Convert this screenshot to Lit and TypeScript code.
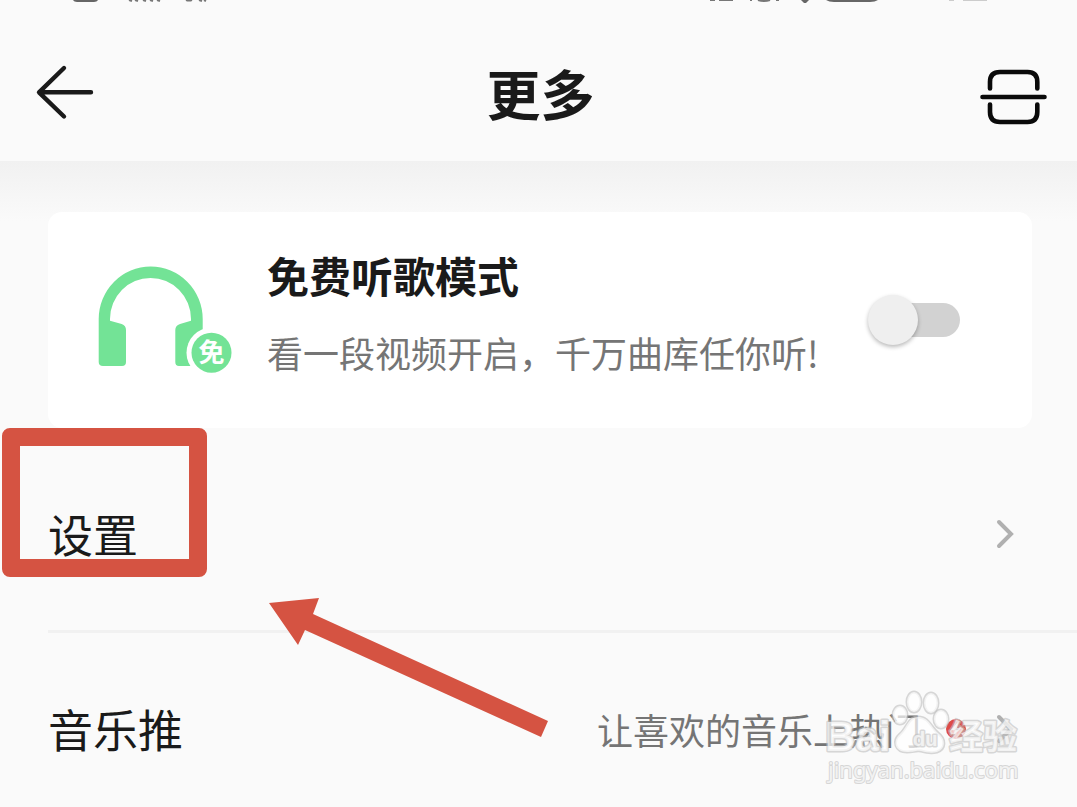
import { LitElement, html, css, svg } from "lit";
import { customElement, property, state } from "lit/decorators.js";

const chevron = html`<svg class="chevron" width="20" height="32" viewBox="0 0 20 32" aria-hidden="true">
  <path d="M4 4 L16 16 L4 28" fill="none" stroke="#b0b0b0" stroke-width="4" stroke-linecap="round" />
</svg>`;

@customElement("status-strip")
class StatusStrip extends LitElement {
  static styles = css`
    :host { display: flex; justify-content: space-between; height: 4px; padding: 0 84px 0 72px; }
    svg { display: block; }
  `;
  render() {
    return html`
      <svg width="140" height="4" viewBox="0 0 140 4" aria-hidden="true">
        <path d="M0 -4 H27 Q27 2 22 2 H5 Q0 2 0 -4Z" fill="#666" />
        <path d="M57 0 l3 1 M63 0 l3 1 M71 0 l3 1 M78 0 l3 1 M85 0 l3 1 M114 0 q3 1 6 0 M127 0 l3 1 M132 0 l2 1" stroke="#777" stroke-width="2" fill="none" />
      </svg>
      <svg width="286" height="4" viewBox="0 0 286 4" aria-hidden="true">
        <path d="M3 0 h5 M12 0 h14 M43 0 h2 M51 0 q6 2 12 0 M69 0 h3" stroke="#777" stroke-width="2" fill="none" />
        <path d="M94 0 h8 l-3 3 h-2Z" fill="#666" />
        <path d="M119 0 H171 Q168 2 163 2 H127 Q122 2 119 0Z" fill="#666" />
        <path d="M242 0 h5 M256 0 h24" stroke="#ccc" stroke-width="2" />
      </svg>`;
  }
}

@customElement("page-header")
class PageHeader extends LitElement {
  static styles = css`
    :host { display: block; background: #fafafa; padding-bottom: 32px; }
    .bar {
      display: grid; grid-template-columns: 1fr auto 1fr; align-items: center;
      padding: 53px 28px 0 32px;
    }
    h1 { margin: 0; font-size: 54px; line-height: 72px; font-weight: 700; color: #1a1a1a; }
    button { display: block; border: 0; padding: 0; background: none; cursor: pointer; }
    .scan { justify-self: end; }
    svg { display: block; }
  `;
  render() {
    return html`
      <status-strip></status-strip>
      <div class="bar">
        <button class="back" aria-label="返回">
          <svg width="64" height="64" viewBox="0 0 64 64" fill="none" stroke="#1a1a1a" stroke-width="4.4" stroke-linecap="round" stroke-linejoin="round">
            <path d="M32 7 L7 31.300 L32 55.500 M8 31.300 H59" />
          </svg>
        </button>
        <h1>更多</h1>
        <button class="scan" aria-label="扫一扫">
          <svg width="70" height="64" viewBox="0 -3 70 64" fill="none" stroke="#0a0a0a" stroke-width="4.600" stroke-linecap="round">
            <path d="M11 24.500 V18 Q11 8 21 8 H48.500 Q58.300 8 58.300 18 V24.500 M3.500 33 H65.500 M11 40.500 V48 Q11 58 21 58 H48.500 Q58.300 58 58.300 48 V40.500" />
          </svg>
        </button>
      </div>`;
  }
}

@customElement("free-mode-card")
class FreeModeCard extends LitElement {
  @state() private on = false;

  static styles = css`
    :host {
      display: flex; align-items: center; margin: 0 45px 0 48px;
      padding: 35px 72px 52px 50px; background: #fff; border-radius: 14px;
    }
    .art { flex: none; display: block; margin: 17px 35px 0 0; }
    .text { flex: 1; display: grid; gap: 25px; }
    .title { font-size: 42px; line-height: 56px; font-weight: 700; color: #1a1a1a; }
    .note { margin: 0; font-size: 36px; line-height: 48px; color: #757575; }
    .badge { font-size: 26px; font-weight: 700; }
    .switch {
      appearance: none; flex: none; display: grid; align-items: center;
      width: 92px; height: 50px; margin: 17px 0 0; cursor: pointer;
    }
    .switch::before, .switch::after { content: ""; grid-area: 1 / 1; }
    .switch::before { height: 34px; margin-left: 8px; border-radius: 17px; background: #d2d2d2; }
    .switch::after {
      width: 50px; height: 50px; border-radius: 50%; background: #efefef;
      box-shadow: 0 2px 4px rgba(0, 0, 0, 0.28);
    }
    .switch:checked::before { background: #a9edc0; }
    .switch:checked::after { justify-self: end; background: #73e396; }
  `;
  render() {
    return html`
      <svg class="art" width="134" height="108" viewBox="0 0 134 108" aria-hidden="true">
        <path fill="#73e396" d="M.7 53 A52 52.500 0 0 1 104.700 53 V97 Q104.700 100 101 100 H81 Q77.300 100 77.300 96 V64 Q77.300 59.500 82 58 L93 54.700 V53 A40.500 41 0 0 0 12 53 V54.700 L23.700 58 Q28 59.500 28 64 V96 Q28 100 24 100 H5 Q.7 100 .7 96Z" />
        <circle cx="113.500" cy="86.700" r="25" fill="#fff" />
        <circle cx="113.500" cy="86.700" r="20" fill="#73e396" />
        <text class="badge" x="113.500" y="96" text-anchor="middle" fill="#fff">免</text>
      </svg>
      <div class="text">
        <label class="title" for="free">免费听歌模式</label>
        <p class="note">看一段视频开启，千万曲库任你听!</p>
      </div>
      <input id="free" class="switch" type="checkbox" role="switch" .checked=${this.on}
        @change=${(e: Event) => (this.on = (e.target as HTMLInputElement).checked)} />`;
  }
}

@customElement("menu-row")
class MenuRow extends LitElement {
  @property() label = "";
  @property() hint = "";

  static styles = css`
    :host { display: block; }
    a {
      display: flex; align-items: center; padding: 0 62px 0 48px;
      font-size: 45px; line-height: 52px; color: #1a1a1a; text-decoration: none;
    }
    .label { flex: 1; }
    .hint { font-size: 36px; color: #757575; }
    .hot { margin: 0 29px 0 25px; }
    svg { display: block; }
  `;
  render() {
    return html`<a href="#">
      <span class="label">${this.label}</span>
      ${this.hint
        ? html`<span class="hint">${this.hint}</span>
            <svg class="hot" width="20" height="20" viewBox="0 0 20 20" aria-hidden="true">
              <circle cx="10" cy="10" r="10" fill="#dc4b47" />
              <path d="M12 3 L5 11 H9 L7 17 L15 9 H11Z" fill="#fff" />
            </svg>`
        : null}
      ${chevron}
    </a>`;
  }
}

@customElement("site-watermark")
class SiteWatermark extends LitElement {
  static styles = css`
    :host { display: block; pointer-events: none; }
    svg { display: block; }
    .mark {
      fill: rgba(255, 255, 255, 0.7); stroke: rgba(190, 190, 190, 0.6);
      stroke-width: 3px; stroke-linejoin: round; paint-order: stroke;
    }
    .latin { font: 700 42px "Liberation Sans", sans-serif; }
    .inner { font: 700 20px "Liberation Sans", sans-serif; }
    .han { font-size: 34px; font-weight: 700; }
    .url { font: 400 22px "Noto Sans", sans-serif; stroke-width: 2px; }
  `;
  render() {
    const toes = [
      [80, 25, 7, 9],
      [94, 12, 7, 10],
      [111, 13, 7, 10],
      [121, 29, 7, 9],
    ];
    return html`<svg width="204" height="100" viewBox="0 0 204 100" aria-hidden="true">
      <g class="mark">
        <text class="latin" x="5" y="61">Bai</text>
        ${toes.map(([x, y, rx, ry]) => svg`<ellipse cx=${x} cy=${y} rx=${rx} ry=${ry} />`)}
        <path d="M98 27 C88 27 87 38 80 44 C72 51 75 62 87 62 C94 62 96 60 101 61 C108 63 113 63 117 62 C126 59 126 49 118 43 C111 37 109 27 98 27Z" />
        <text class="inner" x="93" y="56">du</text>
        <text class="han" x="129" y="59">经验</text>
        <text class="url" x="8" y="88">jingyan.baidu.com</text>
      </g>
    </svg>`;
  }
}

@customElement("app-root")
class AppRoot extends LitElement {
  static styles = css`
    :host {
      display: block; min-height: 100vh; background: #fafafa; overflow: hidden;
      font-family: "Noto Sans CJK SC", sans-serif;
    }
    .content { padding-top: 51px; background: linear-gradient(#f1f1f1, #fafafa 60px); }
    .item { position: relative; }
    .settings { padding: 80px 0 70px; }
    .divider { height: 3px; margin: 0 0 0 48px; border: 0; background: #f1f1f1; }
    .promo { padding: 70px 0 52px; }
    .frame {
      position: absolute; left: 2px; top: 0; box-sizing: border-box;
      width: 205px; height: 149px; border: 18px solid #d55342; border-radius: 8px;
      pointer-events: none;
    }
    .pointer { position: absolute; left: 268px; top: 168px; z-index: 1; pointer-events: none; }
    .watermark { position: absolute; right: 53px; top: 57px; }
  `;
  render() {
    return html`
      <page-header></page-header>
      <main class="content">
        <free-mode-card></free-mode-card>
        <div class="item settings">
          <menu-row label="设置"></menu-row>
          <div class="frame"></div>
          <svg class="pointer" width="282" height="142" viewBox="0 0 282 142" aria-hidden="true">
            <path d="M1 7 L51 2 L45 18 L280 125 L273 141 L37 34 L30 49Z" fill="#d55342" />
          </svg>
        </div>
        <hr class="divider" />
        <div class="item promo">
          <menu-row label="音乐推" hint="让喜欢的音乐上热门"></menu-row>
          <site-watermark class="watermark"></site-watermark>
        </div>
      </main>`;
  }
}
